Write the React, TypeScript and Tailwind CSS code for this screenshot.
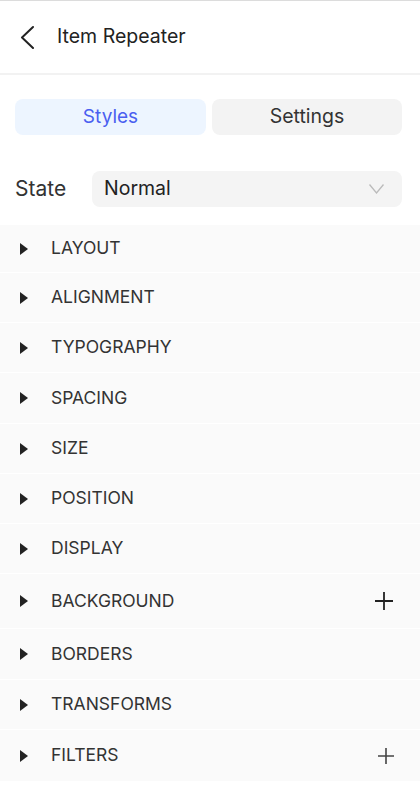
import React from "react";

const sections: { name: string; h: string; plus?: "big" | "small"; first?: boolean }[] = [
  { name: "LAYOUT", h: "h-[47px]", first: true },
  { name: "ALIGNMENT", h: "h-[50px]" },
  { name: "TYPOGRAPHY", h: "h-[50px]" },
  { name: "SPACING", h: "h-[51px]" },
  { name: "SIZE", h: "h-[50px]" },
  { name: "POSITION", h: "h-[50px]" },
  { name: "DISPLAY", h: "h-[50px]" },
  { name: "BACKGROUND", h: "h-[55px]", plus: "big" },
  { name: "BORDERS", h: "h-[51px]" },
  { name: "TRANSFORMS", h: "h-[50px]" },
  { name: "FILTERS", h: "h-[52px]", plus: "small" },
];

export default function App() {
  return (
    <div className="w-[420px] h-[802px] bg-white font-['Inter',sans-serif] text-[#222] overflow-hidden">
      <div className="h-[1px] bg-[#dcdcdc]" />
      <div className="h-[74px] flex items-center pl-[19px] gap-[22px] border-b-2 border-[#f2f2f2]">
        <svg width="16" height="24" viewBox="0 0 16 24" fill="none">
          <path d="M14 2L3 12.5L14 23" stroke="#222" strokeWidth="2" strokeLinecap="round" strokeLinejoin="round" />
        </svg>
        <span className="text-[19.5px] font-normal text-[#222]">Item Repeater</span>
      </div>
      <div className="pl-[15px] pr-[18px] pt-[24px] flex gap-[6px]">
        <div className="flex-1 h-[36px] rounded-[8px] bg-[#edf5ff] flex items-center justify-center text-[19px] text-[#4a5ff0]">Styles</div>
        <div className="w-[190px] h-[36px] rounded-[8px] bg-[#f3f3f3] flex items-center justify-center text-[19.5px] text-[#333]">Settings</div>
      </div>
      <div className="pl-[15px] pr-[18px] mt-[36px] flex items-center">
        <span className="w-[77px] text-[21px] text-[#333]">State</span>
        <div className="flex-1 h-[36px] rounded-[8px] bg-[#f4f4f4] flex items-center justify-between pl-[12px] pr-[18px]">
          <span className="text-[19.5px] text-[#222]">Normal</span>
          <svg width="15" height="10" viewBox="0 0 15 10" fill="none">
            <path d="M0.5 0.5L7.5 9L14.5 0.5" stroke="#bbb" strokeWidth="1.3" />
          </svg>
        </div>
      </div>
      <div className="mt-[18px] bg-[#fafafa]">
        {sections.map((s) => (
          <div
            key={s.name}
            className={`${s.h} flex items-center pl-[20px] pr-[26px] ${s.first ? "" : "border-t border-white"}`}
          >
            <svg width="8" height="12" viewBox="0 0 8 12">
              <path d="M0 0L8 6L0 12Z" fill="#222" />
            </svg>
            <span className="ml-[23px] text-[17.5px] text-[#333] flex-1">{s.name}</span>
            {s.plus === "big" && (
              <svg width="20" height="20" viewBox="0 0 20 20" fill="none">
                <path d="M10 1V19M1 10H19" stroke="#222" strokeWidth="1.8" />
              </svg>
            )}
            {s.plus === "small" && (
              <svg width="18" height="18" viewBox="0 0 18 18" fill="none" className="mr-[-1px]">
                <path d="M9 1V17M1 9H17" stroke="#444" strokeWidth="1.6" />
              </svg>
            )}
          </div>
        ))}
      </div>
    </div>
  );
}
